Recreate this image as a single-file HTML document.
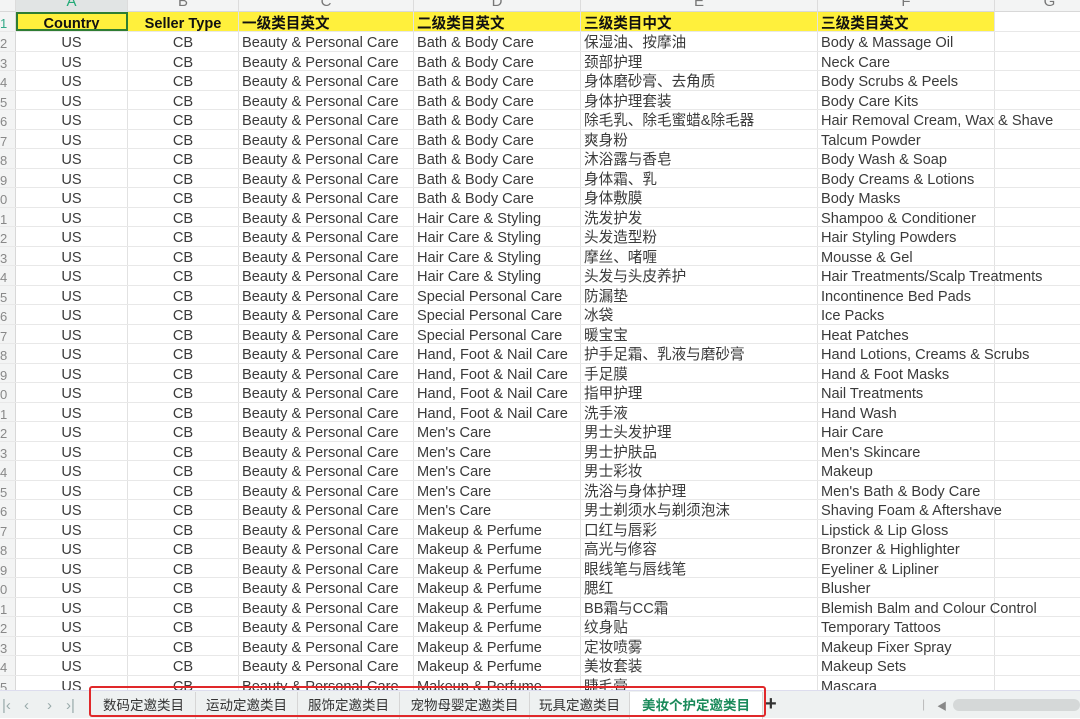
<!DOCTYPE html>
<html><head><meta charset="utf-8"><style>
*{margin:0;padding:0;box-sizing:border-box}
body{width:1080px;height:718px;overflow:hidden;background:#fff;font-family:"Liberation Sans","Noto Sans CJK SC",sans-serif;color:#3a3a3a;position:relative}
.colhdr{position:absolute;top:-8px;left:0;height:20px;width:1080px;background:#f3f4f4;border-bottom:1px solid #d8d8d8;font-size:15px;color:#777}
.colhdr span{position:absolute;top:0;height:20px;text-align:center;border-right:1px solid #dcdcdc;line-height:20px}
.row{position:absolute;left:0;width:1080px;height:19.5px;border-bottom:1px solid #e8e8e8;font-size:14.6px}
.row span{position:absolute;top:0;height:100%;line-height:23px;white-space:nowrap;border-right:1px solid #e2e2e2;padding-left:3px}
.row span:nth-child(1){left:0;width:16px;background:#f3f4f4;color:#888;font-size:13px;padding:0;border-right-color:#d8d8d8}
.row span:nth-child(2){left:16px;width:112px;text-align:center;padding:0}
.row span:nth-child(3){left:128px;width:111px;text-align:center;padding:0}
.row span:nth-child(4){left:239px;width:175px}
.row span:nth-child(5){left:414px;width:167px}
.row span:nth-child(6){left:581px;width:237px}
.row span:nth-child(7){left:818px;width:177px}
.row span:nth-child(8){left:995px;width:100px}
.row.h{height:20px}
.row.h span{background:#fff03c;font-weight:bold;color:#111;line-height:24px}
.row.h span:nth-child(1){background:#f3f4f4;color:#3a8;font-weight:normal}
.row.h span:nth-child(8){background:#fff}
.tabs{position:absolute;left:0;top:690px;width:1080px;height:28px;background:#eef1f1;border-top:1px solid #dde}
.nav{position:absolute;top:6px;font-size:15px;color:#9aa}
.tab{position:absolute;top:1px;height:27px;line-height:27px;font-size:13.5px;color:#333;text-align:center;border-right:1px solid #d6d6d6}
.red{position:absolute;left:89px;top:686px;width:677px;height:31px;border:2.5px solid #e0282a;border-radius:3px}
</style></head><body>
<div class="colhdr">
<span style="left:0;width:16px"></span>
<span style="left:16px;width:112px;background:#e1e4e4;color:#2a7">A</span>
<span style="left:128px;width:111px">B</span>
<span style="left:239px;width:175px">C</span>
<span style="left:414px;width:167px">D</span>
<span style="left:581px;width:237px">E</span>
<span style="left:818px;width:177px">F</span>
<span style="left:995px;width:110px">G</span>
</div>
<div class="row h" style="top:12px"><span>1</span><span style="outline:2px solid #2e7d32;outline-offset:-2px">Country</span><span>Seller Type</span><span>一级类目英文</span><span>二级类目英文</span><span>三级类目中文</span><span>三级类目英文</span><span></span></div>
<div class="row" style="top:32px"><span>2</span><span>US</span><span>CB</span><span>Beauty &amp; Personal Care</span><span>Bath &amp; Body Care</span><span>保湿油、按摩油</span><span>Body &amp; Massage Oil</span><span></span></div>
<div class="row" style="top:51.5px"><span>3</span><span>US</span><span>CB</span><span>Beauty &amp; Personal Care</span><span>Bath &amp; Body Care</span><span>颈部护理</span><span>Neck Care</span><span></span></div>
<div class="row" style="top:71px"><span>4</span><span>US</span><span>CB</span><span>Beauty &amp; Personal Care</span><span>Bath &amp; Body Care</span><span>身体磨砂膏、去角质</span><span>Body Scrubs &amp; Peels</span><span></span></div>
<div class="row" style="top:90.5px"><span>5</span><span>US</span><span>CB</span><span>Beauty &amp; Personal Care</span><span>Bath &amp; Body Care</span><span>身体护理套装</span><span>Body Care Kits</span><span></span></div>
<div class="row" style="top:110px"><span>6</span><span>US</span><span>CB</span><span>Beauty &amp; Personal Care</span><span>Bath &amp; Body Care</span><span>除毛乳、除毛蜜蜡&amp;除毛器</span><span>Hair Removal Cream, Wax &amp; Shave</span><span></span></div>
<div class="row" style="top:129.5px"><span>7</span><span>US</span><span>CB</span><span>Beauty &amp; Personal Care</span><span>Bath &amp; Body Care</span><span>爽身粉</span><span>Talcum Powder</span><span></span></div>
<div class="row" style="top:149px"><span>8</span><span>US</span><span>CB</span><span>Beauty &amp; Personal Care</span><span>Bath &amp; Body Care</span><span>沐浴露与香皂</span><span>Body Wash &amp; Soap</span><span></span></div>
<div class="row" style="top:168.5px"><span>9</span><span>US</span><span>CB</span><span>Beauty &amp; Personal Care</span><span>Bath &amp; Body Care</span><span>身体霜、乳</span><span>Body Creams &amp; Lotions</span><span></span></div>
<div class="row" style="top:188px"><span>0</span><span>US</span><span>CB</span><span>Beauty &amp; Personal Care</span><span>Bath &amp; Body Care</span><span>身体敷膜</span><span>Body Masks</span><span></span></div>
<div class="row" style="top:207.5px"><span>1</span><span>US</span><span>CB</span><span>Beauty &amp; Personal Care</span><span>Hair Care &amp; Styling</span><span>洗发护发</span><span>Shampoo &amp; Conditioner</span><span></span></div>
<div class="row" style="top:227px"><span>2</span><span>US</span><span>CB</span><span>Beauty &amp; Personal Care</span><span>Hair Care &amp; Styling</span><span>头发造型粉</span><span>Hair Styling Powders</span><span></span></div>
<div class="row" style="top:246.5px"><span>3</span><span>US</span><span>CB</span><span>Beauty &amp; Personal Care</span><span>Hair Care &amp; Styling</span><span>摩丝、啫喱</span><span>Mousse &amp; Gel</span><span></span></div>
<div class="row" style="top:266px"><span>4</span><span>US</span><span>CB</span><span>Beauty &amp; Personal Care</span><span>Hair Care &amp; Styling</span><span>头发与头皮养护</span><span>Hair Treatments/Scalp Treatments</span><span></span></div>
<div class="row" style="top:285.5px"><span>5</span><span>US</span><span>CB</span><span>Beauty &amp; Personal Care</span><span>Special Personal Care</span><span>防漏垫</span><span>Incontinence Bed Pads</span><span></span></div>
<div class="row" style="top:305px"><span>6</span><span>US</span><span>CB</span><span>Beauty &amp; Personal Care</span><span>Special Personal Care</span><span>冰袋</span><span>Ice Packs</span><span></span></div>
<div class="row" style="top:324.5px"><span>7</span><span>US</span><span>CB</span><span>Beauty &amp; Personal Care</span><span>Special Personal Care</span><span>暖宝宝</span><span>Heat Patches</span><span></span></div>
<div class="row" style="top:344px"><span>8</span><span>US</span><span>CB</span><span>Beauty &amp; Personal Care</span><span>Hand, Foot &amp; Nail Care</span><span>护手足霜、乳液与磨砂膏</span><span>Hand Lotions, Creams &amp; Scrubs</span><span></span></div>
<div class="row" style="top:363.5px"><span>9</span><span>US</span><span>CB</span><span>Beauty &amp; Personal Care</span><span>Hand, Foot &amp; Nail Care</span><span>手足膜</span><span>Hand &amp; Foot Masks</span><span></span></div>
<div class="row" style="top:383px"><span>0</span><span>US</span><span>CB</span><span>Beauty &amp; Personal Care</span><span>Hand, Foot &amp; Nail Care</span><span>指甲护理</span><span>Nail Treatments</span><span></span></div>
<div class="row" style="top:402.5px"><span>1</span><span>US</span><span>CB</span><span>Beauty &amp; Personal Care</span><span>Hand, Foot &amp; Nail Care</span><span>洗手液</span><span>Hand Wash</span><span></span></div>
<div class="row" style="top:422px"><span>2</span><span>US</span><span>CB</span><span>Beauty &amp; Personal Care</span><span>Men's Care</span><span>男士头发护理</span><span>Hair Care</span><span></span></div>
<div class="row" style="top:441.5px"><span>3</span><span>US</span><span>CB</span><span>Beauty &amp; Personal Care</span><span>Men's Care</span><span>男士护肤品</span><span>Men's Skincare</span><span></span></div>
<div class="row" style="top:461px"><span>4</span><span>US</span><span>CB</span><span>Beauty &amp; Personal Care</span><span>Men's Care</span><span>男士彩妆</span><span>Makeup</span><span></span></div>
<div class="row" style="top:480.5px"><span>5</span><span>US</span><span>CB</span><span>Beauty &amp; Personal Care</span><span>Men's Care</span><span>洗浴与身体护理</span><span>Men's Bath &amp; Body Care</span><span></span></div>
<div class="row" style="top:500px"><span>6</span><span>US</span><span>CB</span><span>Beauty &amp; Personal Care</span><span>Men's Care</span><span>男士剃须水与剃须泡沫</span><span>Shaving Foam &amp; Aftershave</span><span></span></div>
<div class="row" style="top:519.5px"><span>7</span><span>US</span><span>CB</span><span>Beauty &amp; Personal Care</span><span>Makeup &amp; Perfume</span><span>口红与唇彩</span><span>Lipstick &amp; Lip Gloss</span><span></span></div>
<div class="row" style="top:539px"><span>8</span><span>US</span><span>CB</span><span>Beauty &amp; Personal Care</span><span>Makeup &amp; Perfume</span><span>高光与修容</span><span>Bronzer &amp; Highlighter</span><span></span></div>
<div class="row" style="top:558.5px"><span>9</span><span>US</span><span>CB</span><span>Beauty &amp; Personal Care</span><span>Makeup &amp; Perfume</span><span>眼线笔与唇线笔</span><span>Eyeliner &amp; Lipliner</span><span></span></div>
<div class="row" style="top:578px"><span>0</span><span>US</span><span>CB</span><span>Beauty &amp; Personal Care</span><span>Makeup &amp; Perfume</span><span>腮红</span><span>Blusher</span><span></span></div>
<div class="row" style="top:597.5px"><span>1</span><span>US</span><span>CB</span><span>Beauty &amp; Personal Care</span><span>Makeup &amp; Perfume</span><span>BB霜与CC霜</span><span>Blemish Balm and Colour Control</span><span></span></div>
<div class="row" style="top:617px"><span>2</span><span>US</span><span>CB</span><span>Beauty &amp; Personal Care</span><span>Makeup &amp; Perfume</span><span>纹身贴</span><span>Temporary Tattoos</span><span></span></div>
<div class="row" style="top:636.5px"><span>3</span><span>US</span><span>CB</span><span>Beauty &amp; Personal Care</span><span>Makeup &amp; Perfume</span><span>定妆喷雾</span><span>Makeup Fixer Spray</span><span></span></div>
<div class="row" style="top:656px"><span>4</span><span>US</span><span>CB</span><span>Beauty &amp; Personal Care</span><span>Makeup &amp; Perfume</span><span>美妆套装</span><span>Makeup Sets</span><span></span></div>
<div class="row" style="top:675.5px"><span>5</span><span>US</span><span>CB</span><span>Beauty &amp; Personal Care</span><span>Makeup &amp; Perfume</span><span>睫毛膏</span><span>Mascara</span><span></span></div>
<div class="tabs">
<span class="nav" style="left:2px">|&lsaquo;</span>
<span class="nav" style="left:24px">&lsaquo;</span>
<span class="nav" style="left:47px">&rsaquo;</span>
<span class="nav" style="left:66px">&rsaquo;|</span>
<div class="tab" style="left:92px;width:104px">数码定邀类目</div>
<div class="tab" style="left:196px;width:102px">运动定邀类目</div>
<div class="tab" style="left:298px;width:102px">服饰定邀类目</div>
<div class="tab" style="left:400px;width:130px">宠物母婴定邀类目</div>
<div class="tab" style="left:530px;width:100px">玩具定邀类目</div>
<div class="tab" style="left:630px;width:133px;background:#fff;color:#1a8a5a;font-weight:bold">美妆个护定邀类目</div>
<span style="position:absolute;left:765px;top:2px;font-size:20px;font-weight:bold;color:#333">+</span>
<span style="position:absolute;left:922px;top:6px;font-size:12px;color:#bbb">|</span>
<span style="position:absolute;left:937px;top:7px;font-size:10px;color:#888">◀</span>
<div style="position:absolute;left:953px;top:8px;width:127px;height:12px;background:#d5d8d8;border-radius:6px"></div>
</div>
<div class="red"></div>
</body></html>
